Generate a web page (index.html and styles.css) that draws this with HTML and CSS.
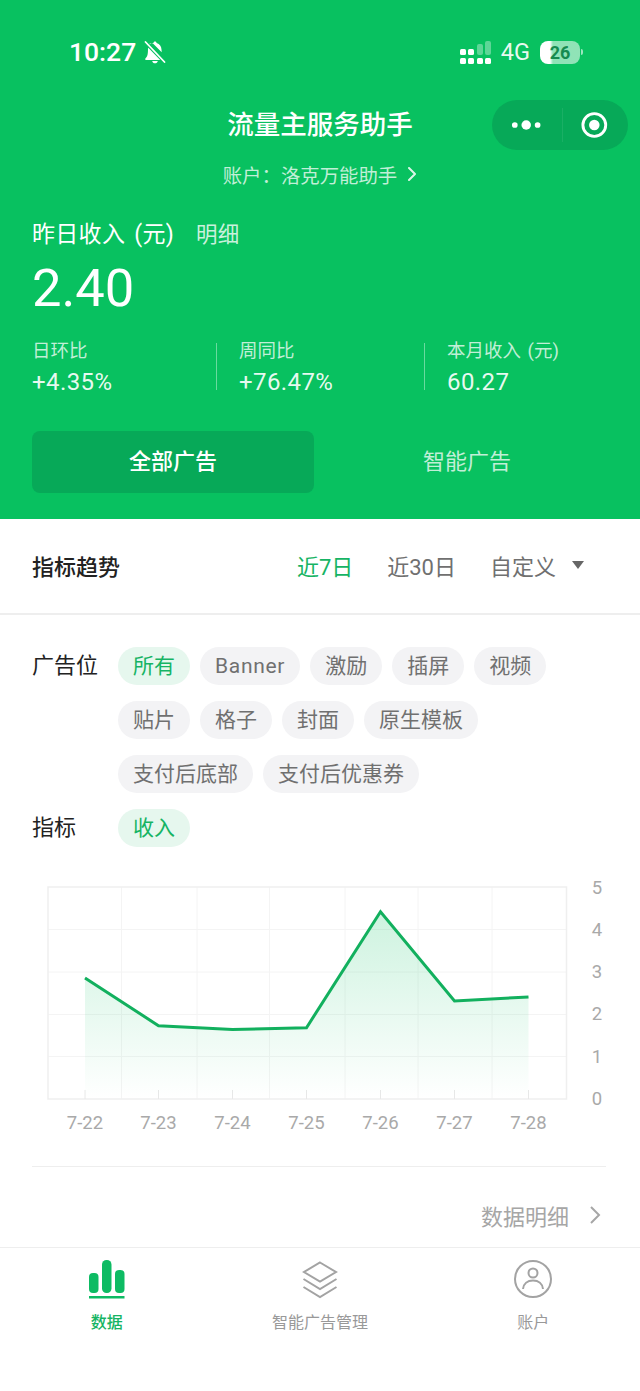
FILE: index.html
```html
<!DOCTYPE html>
<html lang="zh-CN">
<head>
  <meta charset="UTF-8">
  <meta name="viewport" content="width=device-width,initial-scale=1.0">
  <title>流量主服务助手</title>
  <link rel="stylesheet" href="styles.css">
</head>
<body>
 <!-- Green header -->
 <div class="top">
   <div class="status">
     <span class="time">10:27</span>
     <svg class="bell" viewBox="0 0 22 24"><path d="M11 1.500c.9 0 1.500.6 1.600 1.500 3.200.8 4.700 3.400 4.900 6.600l.2 2.600L9 3.400C7 2.800 5.600 3.300 5 4.500 6 3.600 8 3 9.400 3c.1-.9.700-1.500 1.600-1.500zM4.300 7.700l11.900 12.300H2c-.8 0-1.100-.8-.6-1.400 1.500-1.600 2.300-3 2.500-6.500l.1-2.800c0-.6.100-1.100.3-1.600zM8.200 21h5.600c-.3 1.500-1.400 2.300-2.800 2.300s-2.500-.8-2.800-2.300z" fill="#fff"/><path d="M1.500 2 20.500 22" stroke="#fff" stroke-width="1.800" stroke-linecap="round"/></svg>
     <svg class="signal" viewBox="0 0 32 23">
       <g fill="#fff">
         <rect x="0" y="8" width="6" height="6" rx="1.500"/><rect x="8" y="8" width="6" height="6" rx="1.500"/>
         <rect x="0" y="17" width="6" height="6" rx="1.500"/><rect x="8" y="17" width="6" height="6" rx="1.500"/>
         <rect x="17" y="17" width="6" height="6" rx="1.500"/><rect x="25" y="17" width="6" height="6" rx="1.500"/>
       </g>
       <g fill="#fff" opacity=".35">
         <rect x="17" y="3" width="6" height="11" rx="2"/><rect x="25" y="0" width="6" height="14" rx="2"/>
       </g>
     </svg>
     <span class="net">4G</span>
     <span class="battery">26</span>
   </div>

   <div class="nav">
     <div class="nav-title">流量主服务助手</div>
     <div class="capsule">
       <svg class="capsule-dots" viewBox="0 0 32 12"><circle cx="4" cy="6" r="3" fill="#fff"/><circle cx="16" cy="6" r="5" fill="#fff"/><circle cx="28" cy="6" r="3" fill="#fff"/></svg>
       <span class="capsule-line"></span>
       <svg class="capsule-ring" viewBox="0 0 28 28"><circle cx="14" cy="14" r="12" fill="none" stroke="#fff" stroke-width="3"/><circle cx="14" cy="14" r="5.500" fill="#fff"/></svg>
     </div>
   </div>

   <div class="account">账户：洛克万能助手
     <svg class="account-arrow" viewBox="0 0 10 16"><path d="M2 2l6 6-6 6" fill="none" stroke="#fff" stroke-width="2" stroke-linecap="round" stroke-linejoin="round"/></svg>
   </div>

   <div class="income"><span>昨日收入 (元)</span><span class="income-link">明细</span></div>
   <div class="amount">2.40</div>

   <div class="stats">
     <div class="stat"><div class="stat-label">日环比</div><div class="stat-value">+4.35%</div></div>
     <div class="stat"><div class="stat-label">周同比</div><div class="stat-value">+76.47%</div></div>
     <div class="stat"><div class="stat-label">本月收入 (元)</div><div class="stat-value">60.27</div></div>
   </div>

   <div class="tabs">
     <div class="tab active">全部广告</div>
     <div class="tab">智能广告</div>
   </div>
 </div>

 <!-- Trend heading -->
 <div class="trend">
   <div class="trend-title">指标趋势</div>
   <div class="range on">近7日</div>
   <div class="range">近30日</div>
   <div class="range">自定义</div>
   <span class="caret"></span>
 </div>

 <!-- Filters -->
 <div class="filters">
   <div class="filter">
     <div class="filter-label">广告位</div>
     <div class="chips">
       <span class="chip on">所有</span>
       <span class="chip chip-latin">Banner</span>
       <span class="chip">激励</span>
       <span class="chip">插屏</span>
       <span class="chip">视频</span>
       <span class="chip">贴片</span>
       <span class="chip">格子</span>
       <span class="chip">封面</span>
       <span class="chip">原生模板</span>
       <span class="chip">支付后底部</span>
       <span class="chip">支付后优惠券</span>
     </div>
   </div>
   <div class="filter">
     <div class="filter-label">指标</div>
     <div class="chips"><span class="chip on">收入</span></div>
   </div>
 </div>

 <!-- Chart -->
 <svg class="chart" viewBox="0 870 640 280">
   <defs>
     <linearGradient id="area" x1="0" y1="912" x2="0" y2="1099" gradientUnits="userSpaceOnUse">
       <stop offset="0" stop-color="#07c160" stop-opacity=".2"/>
       <stop offset="1" stop-color="#07c160" stop-opacity="0"/>
     </linearGradient>
   </defs>
   <g stroke="#f4f4f4" stroke-width="1">
     <path d="M48 929.500H566M48 972H566M48 1014.500H566M48 1056.500H566"/>
     <path d="M121.500 887V1099M197 887V1099M269.500 887V1099M345 887V1099M418 887V1099M492 887V1099"/>
   </g>
   <path d="M48 887H566.500V1099H48Z" fill="none" stroke="#efefef" stroke-width="1.500"/>
   <path d="M85 1090V1099M158.500 1090V1099M232.500 1090V1099M306.500 1090V1099M380.500 1090V1099M454.500 1090V1099M528.500 1090V1099" stroke="#e8e8e8"/>
   <path d="M85 978L158.500 1025.700L232.500 1029.500L306.500 1027.700L380.500 911.700L454.500 1001L528.500 997V1099H85Z" fill="url(#area)"/>
   <path d="M85 978L158.500 1025.700L232.500 1029.500L306.500 1027.700L380.500 911.700L454.500 1001L528.500 997" fill="none" stroke="#12b05e" stroke-width="3"/>
   <g class="axis" text-anchor="middle">
     <text x="85" y="1129">7-22</text>
     <text x="158.500" y="1129">7-23</text>
     <text x="232.500" y="1129">7-24</text>
     <text x="306.500" y="1129">7-25</text>
     <text x="380.500" y="1129">7-26</text>
     <text x="454.500" y="1129">7-27</text>
     <text x="528.500" y="1129">7-28</text>
     <text x="597" y="894">5</text>
     <text x="597" y="936">4</text>
     <text x="597" y="978">3</text>
     <text x="597" y="1020">2</text>
     <text x="597" y="1063">1</text>
     <text x="597" y="1105">0</text>
   </g>
 </svg>

 <div class="rule"></div>

 <div class="more">数据明细
   <svg class="more-arrow" viewBox="0 0 12 20"><path d="M2 2l8 8-8 8" fill="none" stroke="#a6a6a6" stroke-width="2"/></svg>
 </div>

 <!-- Bottom tabs -->
 <div class="tabbar">
   <div class="tabbar-item on">
     <svg class="tabbar-icon" viewBox="0 0 40 40">
       <rect x="2" y="14" width="9.500" height="20" rx="4" fill="#0dbb63"/>
       <rect x="15" y="1" width="9.500" height="33" rx="4.500" fill="#0dbb63"/>
       <rect x="28" y="11" width="9.500" height="23" rx="4" fill="#0dbb63"/>
       <rect x="2" y="37" width="35.500" height="2.500" fill="#0dbb63"/>
     </svg>
     <div class="tabbar-text">数据</div>
   </div>
   <div class="tabbar-item">
     <svg class="tabbar-icon" viewBox="0 0 40 40">
       <g fill="none" stroke="#a3a3a3" stroke-width="2">
         <path d="M20 3.500L36 13L20 22.500L4 13Z"/>
         <path d="M3.500 20L20 30L36.500 20"/>
         <path d="M3.500 28L20 38L36.500 28"/>
       </g>
     </svg>
     <div class="tabbar-text">智能广告管理</div>
   </div>
   <div class="tabbar-item">
     <svg class="tabbar-icon" viewBox="0 0 40 40">
       <g fill="none" stroke="#a3a3a3" stroke-width="2">
         <circle cx="20" cy="20" r="18"/>
         <circle cx="20" cy="14" r="4.500"/>
         <path d="M10 30c.5-5.500 4.500-8.500 10-8.500s9.500 3 10 8.500"/>
       </g>
     </svg>
     <div class="tabbar-text">账户</div>
   </div>
 </div>
</body>
</html>
```

FILE: styles.css
```css
:root{--main:#08c160;--dark:#07a958;--green:#16b464;--txt:#222;--gray:#707070;--light:#a6a6a6;--chip:#f3f3f5;--chip-on:#e6f7ee;--line:#eee}
*{box-sizing:border-box;margin:0;padding:0}
body{font-family:Roboto,"Noto Sans CJK SC",sans-serif;background:#fff;color:var(--txt);width:640px;height:1391px;overflow:hidden}

/* header */
.top{background:var(--main);color:#fff;height:519px;padding:0 32px}
.status{display:flex;align-items:center;height:100px;padding:40px 28px 36px 37px}
.time{font-size:26.500px;font-weight:500;line-height:24px}
.bell{width:22px;height:24px;margin-left:8px}
.signal{width:32px;height:23px;margin-left:auto}
.net{font-size:23.500px;line-height:24px;margin-left:9px;color:rgba(255,255,255,.92)}
.battery{position:relative;width:40px;height:23px;margin-left:10px;border-radius:8px;background:linear-gradient(90deg,#fff 0,#fff 10px,rgba(255,255,255,.55) 13px);color:#168a50;font-size:18px;font-weight:700;line-height:23px;text-align:center}
.battery::after{content:"";position:absolute;top:8px;right:-3px;width:2px;height:6px;border-radius:0 2px 2px 0;background:rgba(255,255,255,.6)}

.nav{position:relative;height:50px;text-align:center}
.nav-title{font-size:26.500px;font-weight:500;line-height:50px}
.capsule{position:absolute;top:0;right:-20px;display:flex;align-items:center;width:136px;height:50px;border-radius:25px;background:var(--dark);padding:0 20px}
.capsule-dots{width:32px;height:12px;margin-left:-1px}
.capsule-line{width:1px;height:34px;margin:0 19px 0 21px;background:rgba(255,255,255,.08)}
.capsule-ring{width:28px;height:28px;margin-left:-1px}

.account{display:flex;align-items:center;justify-content:center;margin-top:11px;height:26px;font-size:19.400px;color:rgba(255,255,255,.75)}
.account-arrow{width:10px;height:16px;margin-left:10px;opacity:.85}

.income{display:flex;gap:22px;margin-top:35px;font-size:23px;line-height:26px;word-spacing:3px;letter-spacing:.3px}
.income-link{font-size:21.500px;color:rgba(255,255,255,.8)}
.amount{margin-top:10px;font-size:52.500px;line-height:60px}

.stats{display:grid;grid-template-columns:184px 208px 1fr;margin-top:25px}
.stat{height:47px}
.stat + .stat{border-left:1px solid rgba(255,255,255,.4);padding-left:22px}
.stat-label{font-size:18.500px;line-height:16px;word-spacing:2px;color:rgba(255,255,255,.75)}
.stat-value{margin-top:9px;font-size:24px;line-height:28px;letter-spacing:.4px;color:rgba(255,255,255,.92)}

.tabs{display:grid;grid-template-columns:1fr 1fr;gap:12px;margin-top:41px}
.tab{height:62px;border-radius:8px;font-size:22px;line-height:62px;text-align:center;color:rgba(255,255,255,.75)}
.tab.active{background:var(--dark);color:#fff;font-weight:500}

/* trend heading */
.trend{display:flex;align-items:center;height:96px;padding:0 56px 3px 32px;border-bottom:2px solid var(--line);font-size:22px}
.trend-title{margin-right:auto;font-weight:500}
.range{margin-left:34px;color:var(--gray)}
.range.on{color:var(--green)}
.caret{margin-left:16px;border:6px solid transparent;border-top:8px solid #666;border-bottom:0}

/* filters */
.filters{padding:32px 32px 0}
.filter{display:flex}
.filter + .filter{margin-top:16px}
.filter-label{width:86px;font-size:22px;line-height:38px}
.chips{flex:1;display:flex;flex-wrap:wrap;gap:16px 10px}
.chip{height:38px;padding:0 15px;border-radius:19px;background:var(--chip);color:var(--gray);font-size:21px;line-height:38px}
.chip.on{background:var(--chip-on);color:var(--green)}
.chip-latin{letter-spacing:.7px}

/* chart */
.chart{display:block;width:640px;height:280px;margin-top:23px}
.axis{font-size:18.500px;fill:#a9a9a9}

.rule{margin:16px 34px 0 32px;border-top:1px solid var(--line)}
.more{display:flex;align-items:center;justify-content:flex-end;height:30px;margin-top:33px;padding-right:39px;font-size:22px;color:var(--light)}
.more-arrow{width:12px;height:20px;margin-left:20px}

/* bottom tabs */
.tabbar{display:grid;grid-template-columns:repeat(3,1fr);margin-top:17px;padding-top:11px;border-top:1px solid var(--line)}
.tabbar-item{display:flex;flex-direction:column;align-items:center;color:#999}
.tabbar-item.on{color:var(--green);font-weight:500}
.tabbar-icon{width:40px;height:40px}
.tabbar-text{margin-top:14px;font-size:16px;line-height:20px}
```
